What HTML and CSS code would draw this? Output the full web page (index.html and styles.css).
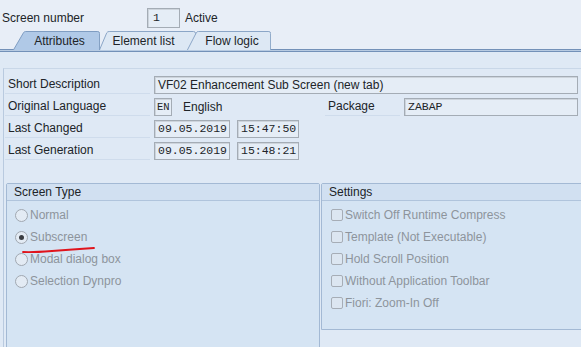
FILE: index.html
```html
<!DOCTYPE html>
<html lang="en">
<head>
  <meta charset="UTF-8">
  <title>Screen Attributes</title>
  <link rel="stylesheet" href="styles.css">
</head>
<body>
<div class="top">
  <span class="top-label">Screen number</span>
  <span class="field mono num">1</span>
  <span class="status">Active</span>
</div>

<div class="tabs">
  <div class="tab active w-attr">
    <svg viewBox="0 0 100 19" preserveAspectRatio="none"><path d="M0.5,19 L12,1.8 Q12.8,0.5 14.5,0.5 L97.5,0.5 Q99.5,0.5 99.5,2.5 L99.5,19" vector-effect="non-scaling-stroke"/></svg>
    <span>Attributes</span>
  </div>
  <div class="tab w-elem">
    <svg viewBox="0 0 100 19" preserveAspectRatio="none"><path d="M0.5,19 L8,1.8 Q8.8,0.5 10.5,0.5 L97.5,0.5 Q99.5,0.5 99.5,2.5 L99.5,19" vector-effect="non-scaling-stroke"/></svg>
    <span>Element list</span>
  </div>
  <div class="tab w-flow">
    <svg viewBox="0 0 100 19" preserveAspectRatio="none"><path d="M0.5,19 L11,1.8 Q11.8,0.5 13.5,0.5 L97.5,0.5 Q99.5,0.5 99.5,2.5 L99.5,19" vector-effect="non-scaling-stroke"/></svg>
    <span>Flow logic</span>
  </div>
</div>
<div class="tab-line"></div>

<div class="content">
  <div class="box">
    <div class="rows">
      <div class="row">
        <span class="label">Short Description</span>
        <span class="field w-desc">VF02 Enhancement Sub Screen (new tab)</span>
      </div>
      <div class="row">
        <span class="label">Original Language</span>
        <span class="field mono w-lang">EN</span>
        <span class="lang-text">English</span>
        <span class="label pkg-label">Package</span>
        <span class="field mono w-pkg">ZABAP</span>
      </div>
      <div class="row">
        <span class="label">Last Changed</span>
        <span class="field mono w-date">09.05.2019</span>
        <span class="field mono w-time">15:47:50</span>
      </div>
      <div class="row">
        <span class="label">Last Generation</span>
        <span class="field mono w-date">09.05.2019</span>
        <span class="field mono w-time">15:48:21</span>
      </div>
    </div>

    <div class="groups">
      <div class="group type">
        <div class="group-head">Screen Type</div>
        <div class="opts">
          <div class="opt"><span class="radio"></span>Normal</div>
          <div class="opt"><span class="radio on"></span>Subscreen</div>
          <div class="opt"><span class="radio"></span>Modal dialog box</div>
          <div class="opt"><span class="radio"></span>Selection Dynpro</div>
        </div>
        <svg class="mark" width="74" height="8" viewBox="0 0 74 8"><path d="M1,6 Q10,6.6 30,5 T72,2" /></svg>
      </div>
      <div class="group settings">
        <div class="group-head">Settings</div>
        <div class="opts">
          <div class="opt"><span class="check"></span>Switch Off Runtime Compress</div>
          <div class="opt"><span class="check"></span>Template (Not Executable)</div>
          <div class="opt"><span class="check"></span>Hold Scroll Position</div>
          <div class="opt"><span class="check"></span>Without Application Toolbar</div>
          <div class="opt"><span class="check"></span>Fiori: Zoom-In Off</div>
        </div>
      </div>
    </div>
  </div>
</div>
</body>
</html>
```

FILE: styles.css
```css
body {
  margin: 0;
  width: 581px;
  height: 347px;
  overflow: hidden;
  background: #e8eef7;
  font-family: "Liberation Sans", Arial, sans-serif;
  font-size: 12px;
  color: #202428;
}
.top {
  box-sizing: border-box;
  display: flex;
  align-items: center;
  height: 31px;
  padding: 4px 0 0 2px;
}
.top-label {
  width: 145px;
}
.field {
  box-sizing: border-box;
  display: inline-block;
  flex-shrink: 0;
  height: 18px;
  line-height: 16px;
  padding: 0 3px;
  border: 1px solid #a4acb5;
  background: #e5edf6;
  box-shadow: inset 1px 1px 0 #cdd4dc;
  white-space: nowrap;
  overflow: hidden;
}
.mono {
  font-family: "Liberation Mono", "Courier New", monospace;
  font-size: 11.5px;
}
.num {
  width: 33px;
  height: 20px;
  line-height: 18px;
  padding-left: 5px;
}
.status {
  margin-left: 5px;
}

/* tabs */
.tabs {
  display: flex;
  height: 18px;
  margin-left: 13px;
}
.tab {
  display: grid;
  height: 18px;
  position: relative;
  flex-shrink: 0;
}
.tab > * {
  grid-area: 1 / 1;
}
.tab svg {
  width: 100%;
  height: 19px;
}
.tab path {
  fill: #dde8f4;
  stroke: #8ba6c7;
  stroke-width: 1;
}
.tab span {
  align-self: center;
  justify-self: center;
  padding: 1px 0 0 6px;
  line-height: 18px;
}
.tab.active {
  z-index: 2;
}
.tab.active path {
  fill: #b0c9e7;
  stroke: #7f9dc2;
}
.w-attr {
  width: 87px;
}
.w-elem {
  width: 97px;
  margin-left: -1px;
}
.w-elem span {
  padding: 1px 8px 0 0;
}
.w-flow {
  width: 84px;
  margin-left: -9px;
}
.tab-line {
  height: 1px;
  background: #b8cbe2;
  border-top: 1px solid #7391b8;
  border-bottom: 1px solid #7391b8;
}

/* content */
.content {
  box-sizing: border-box;
  background: #dfe9f5;
  padding: 16px 0 0 3px;
  height: 295px;
  overflow: hidden;
}
.box {
  border-left: 1px solid #b9cadf;
  border-top: 1px solid #c9d7e8;
  height: 290px;
  padding-top: 7px;
}
.rows {
  width: 573px;
  margin-left: 1px;
}
.row {
  display: flex;
  align-items: center;
  height: 18px;
  margin-bottom: 4px;
}
.label {
  box-sizing: border-box;
  flex-shrink: 0;
  width: 145px;
  height: 18px;
  line-height: 17px;
  padding-left: 3px;
  margin-right: 4px;
  border-bottom: 1px solid #cfdcec;
}
.w-desc {
  width: 424px;
}
.w-lang {
  width: 18px;
  padding: 0 2px;
  font-size: 10.5px;
}
.lang-text {
  margin-left: 11px;
}
.pkg-label {
  width: 75px;
  margin-left: auto;
  padding-left: 3px;
}
.w-pkg {
  width: 174px;
}
.w-date {
  width: 76px;
  margin-right: 7px;
}
.w-time {
  width: 62px;
}

/* groups */
.groups {
  display: flex;
  gap: 1px;
  margin: 23px 0 0 2px;
}
.group {
  position: relative;
  flex-shrink: 0;
  box-sizing: border-box;
  border: 1px solid #a3b9d4;
  border-radius: 2px 2px 0 0;
  background: #d5e4f3;
}
.type {
  width: 314px;
  height: 200px;
}
.settings {
  width: 300px;
  height: 147px;
}
.group-head {
  height: 16px;
  line-height: 16px;
  padding-left: 7px;
  background: #d1e0f1;
  border-bottom: 1px solid #b0c4dc;
}
.opts {
  padding-top: 3px;
}
.opt {
  display: flex;
  align-items: center;
  height: 22px;
  color: #8d949c;
}
.radio {
  box-sizing: border-box;
  width: 13px;
  height: 13px;
  margin: 0 2px 0 8px;
  border: 1px solid #a1a8b1;
  border-radius: 50%;
  background: #e3ebf4;
  display: flex;
  align-items: center;
  justify-content: center;
}
.radio.on::after {
  content: "";
  width: 5px;
  height: 5px;
  border-radius: 50%;
  background: #3a3d42;
}
.check {
  box-sizing: border-box;
  width: 12px;
  height: 12px;
  margin: 0 2px 0 9px;
  border: 1px solid #a6adb6;
  border-radius: 2px;
  background: #dce6f1;
}
.mark {
  position: absolute;
  left: 15px;
  top: 62px;
}
.mark path {
  fill: none;
  stroke: #e0141c;
  stroke-width: 1.8;
  stroke-linecap: round;
}
```
